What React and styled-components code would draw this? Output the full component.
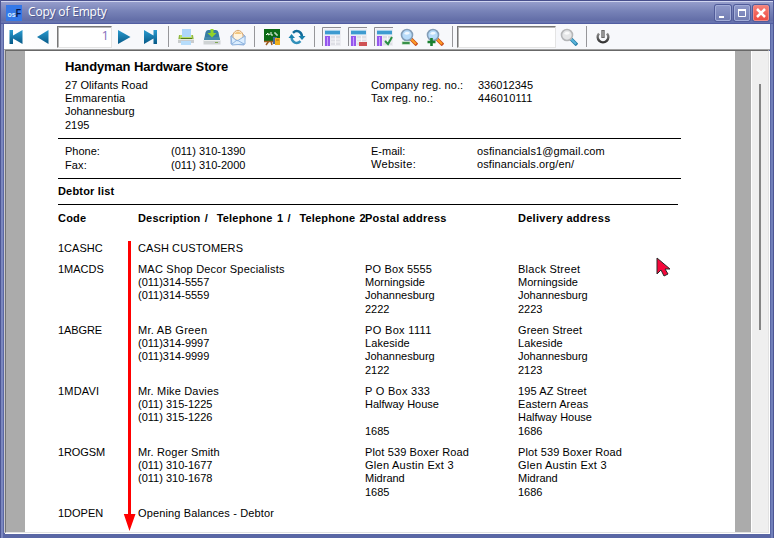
import React from "react";
import styled, { createGlobalStyle } from "styled-components";

const GlobalStyle = createGlobalStyle`
  * { box-sizing: border-box; }
  html, body { margin: 0; padding: 0; overflow: hidden; }
`;

const Window = styled.div`
  position: relative;
  width: 774px;
  height: 538px;
  display: flex;
  flex-direction: column;
  background: linear-gradient(90deg, #4d5694 0 1px, #7b87bf 1px 3px, #5a67a5 3px 771px, #7180ba 771px 773px, #4d5694 773px);
  padding: 0 4px 4px;
  font-family: "Liberation Sans", Arial, sans-serif;
`;

const TitleBar = styled.header`
  height: 24px;
  flex: none;
  margin: 0 -4px;
  padding: 1px 4px 0 5px;
  display: flex;
  align-items: center;
  background: linear-gradient(#484f8c 0 1px, #d0d5f0 1px 2px, #959dcb 2px, #7883b8 11px, #616ca6 21px, #6f7cb5 22px, #47539a 24px);
  border-left: 1px solid #4d5694;
  border-right: 1px solid #4d5694;
`;

const AppIcon = styled.svg`
  width: 16px;
  height: 16px;
`;

const Caption = styled.div`
  flex: 1;
  margin: -2px 0 0 6px;
  font: 12px "Open Sans", sans-serif;
  line-height: 20px;
  letter-spacing: -0.18px;
  color: #fff;
  text-shadow: 1px 1px 0 #525b91;
`;

const CaptionButtons = styled.div`
  display: flex;
  gap: 3px;
`;

const CaptionButton = styled.div`
  width: 16px;
  height: 16px;
  border-radius: 2px;
  border: 1px solid ${(p) => (p.$close ? "#f18a86" : "#a3add8")};
  box-shadow: 0 0 0 1px #515c9a;
  background: ${(p) => (p.$close ? "linear-gradient(#f58078, #ef4c43)" : "linear-gradient(#8e98c9, #727db2)")};
  svg { display: block; width: 14px; height: 14px; }
`;

const Toolbar = styled.nav`
  height: 26px;
  flex: none;
  padding-left: 2px;
  display: flex;
  align-items: center;
  border-bottom: 1px solid #a0a0a0;
  background: linear-gradient(90deg, #fff, #f7f8fb 15%);
`;

const Tool = styled.div`
  width: ${(p) => p.$w || 26}px;
  height: 24px;
  flex: none;
  display: flex;
  align-items: center;
  justify-content: center;
  svg { display: block; width: ${(p) => p.$size || 18}px; height: ${(p) => p.$size || 18}px; }
`;

const Separator = styled.div`
  width: 1px;
  height: 21px;
  flex: none;
  background: #96969a;
  margin: 0 ${(p) => p.$after || 0}px 0 ${(p) => p.$before || 0}px;
`;

const Field = styled.div`
  width: ${(p) => p.$w}px;
  height: 22px;
  flex: none;
  background: #fff;
  border: 1px solid #e4e4e4;
  border-top-color: #777;
  border-left-color: #777;
  box-shadow: inset 1px 1px #b5b5b5;
  text-align: right;
  padding-right: 2px;
  font: 13px/16px "Open Sans", sans-serif;
  color: #8672bd;
`;

const Viewer = styled.main`
  flex: 1;
  min-height: 0;
  display: flex;
  margin: 0 1px 1px;
  border: 1px solid #e2e2e2;
  border-top-color: #686868;
  border-left-color: #747474;
  background: #ababab;
  box-shadow: -1px 0 #c9c9cf, 1px 1px #fff, 0 1px #fff;
`;

const Paper = styled.article`
  width: 710px;
  margin-left: 19px;
  background: #fff;
  padding: 8px 0 0 33px;
  overflow: hidden;
  color: #000;
  font-size: 11px;
  white-space: pre;
`;

const ScrollTrack = styled.div`
  margin-left: auto;
  width: 17px;
  border-left: 1px solid #fff;
  background: #efefef;
  padding: 33px 0 0 7px;
`;

const ScrollThumb = styled.div`
  width: 2px;
  height: 246px;
  background: #858585;
`;

const CompanyName = styled.h1`
  margin: 0 0 5px 7px;
  font-size: 13px;
  line-height: 15px;
  letter-spacing: -0.13px;
`;

const CompanyDetails = styled.section`
  height: 59px;
  display: grid;
  grid-template-columns: 306px 107px 1fr;
  margin-left: 7px;
`;

const ContactDetails = styled.section`
  height: 39px;
  padding-top: 6px;
  display: grid;
  grid-template-columns: 106px 200px 106px 1fr;
  margin-left: 7px;
`;

const Rule = styled.div`
  width: ${(p) => p.$w}px;
  height: 1px;
  background: #000;
`;

const SectionTitle = styled.h2`
  height: 25px;
  margin: 0;
  padding-top: 5px;
  font-size: 11px;
  line-height: 14px;
  letter-spacing: 0.18px;
`;

const Record = styled.div`
  display: grid;
  grid-template-columns: 80px 227px 153px 1fr;
  height: ${(p) => p.$h || 61}px;
`;

const HeadRow = styled(Record)`
  height: 37px;
  padding-top: 7px;
  font-weight: bold;
`;

const Line = styled.div`
  height: ${(p) => p.$lh}px;
  line-height: 13px;
  letter-spacing: ${(p) => p.$ls}px;
  word-spacing: ${(p) => p.$ws}px;
  &:nth-child(4) { margin-top: 1px; }
`;

// Each line is either a string or a [text, letterSpacing, wordSpacing] tuple.
const Lines = ({ lines, lh = 13 }) => (
  <div>
    {lines.map((line, i) => {
      const [text, tracking = 0, wordGap = 0] = Array.isArray(line) ? line : [line];
      return <Line key={i} $ls={tracking} $ws={wordGap} $lh={lh}>{text}</Line>;
    })}
  </div>
);

const ArrowOverlay = styled.svg`
  position: absolute;
  left: 123px;
  top: 241px;
  width: 13px;
  height: 291px;
`;

const Pointer = styled.svg`
  position: absolute;
  left: 655px;
  top: 257px;
  width: 16px;
  height: 21px;
`;

const Svg = ({ children }) => <svg viewBox="0 0 18 18">{children}</svg>;

const NavIcon = ({ first, last, back }) => (
  <Svg>
    <defs>
      <linearGradient id="navBlue" x1="0" y1="0" x2="0" y2="1">
        <stop offset="0" stopColor="#2a9bd0" />
        <stop offset="1" stopColor="#075987" />
      </linearGradient>
    </defs>
    <g fill="url(#navBlue)">
      {first && <path d="M2.500 2h3.500v5.500L15.500 2v14L6 10.500V16H2.500z" />}
      {last && <path d="M16 2h-3.500v5.500L3 2v14l9.500-5.500V16H16z" />}
      {!first && !last && <path d={back ? "M15.500 2v14L4 9z" : "M3 2v14l12.500-7z"} />}
    </g>
  </Svg>
);

const PrintIcon = () => (
  <Svg>
    <path d="M5 1h9v9H5z" fill="#aed6f9" />
    <path d="M2 7h3v3h9V7h2l1 6H1z" fill="#91b943" />
    <path d="M4 9h11v2H4z" fill="#517b1e" />
    <path d="M3 7h2v2h9V7h1v3H3z" fill="#b9df68" />
    <path d="M1 12h16v3H1z" fill="#c9cccd" />
    <path d="M4 13h10v4H4z" fill="#b7ddfb" />
    <path d="M1 11h16v1H1z" fill="#e6eadf" />
  </Svg>
);

const SaveIcon = () => (
  <Svg>
    <path d="M5 2h8q2 0 2.500 2.500L17 12H1l1.500-7.500Q3 2 5 2z" fill="#367da3" />
    <path d="M2 9h14l1 4H1z" fill="#4489aa" />
    <path d="M.5 12h17v4.500H.5z" fill="#cfd3d4" />
    <path d="M.5 12h17v1H.5z" fill="#edf0f0" />
    <path d="M12 14h3v1h-3z" fill="#80a955" />
    <path d="M7.500 1h3v4h3L9 9.500 4.500 5h3z" fill="#91d329" />
  </Svg>
);

const MailIcon = () => (
  <Svg>
    <path d="M2 8l7-6 7 6-1 9-13-1z" fill="#b9d5f4" stroke="#91add8" />
    <path d="M4 7c1-6 9-6 10 0v4l-5 2-5-3z" fill="#fff4df" stroke="#dba76c" />
    <path d="M5 6q4-5 8 0z" fill="#f2c67e" />
    <path d="M2 8l6 5 8-5v8l-13 1zM3 16l5-4 7 4" fill="#dceeff" stroke="#8eb3de" />
  </Svg>
);

const BoardIcon = () => (
  <Svg>
    <path d="M1 1h16v12H1z" fill="#0c6a16" />
    <path d="M3 7l2-2v2l2-1M8 4v3h2M11 5h2v2h2" fill="none" stroke="#f3fff1" />
    <path d="M3 17l3-4M8 13l1 4M1 13.500h10" stroke="#9d5c1e" strokeWidth="1.500" />
    <path d="M10 9h4v7h-4z" fill="#47689a" />
    <path d="M12 10h5v7h-5z" fill="#efae1c" />
    <path d="M13 12h3" stroke="#a76509" />
  </Svg>
);

const RefreshIcon = () => (
  <Svg>
    <path d="M5 4.800c3.500-3.500 8.500-1.500 9 3.700" fill="none" stroke="#116b9a" strokeWidth="2.500" />
    <path d="M12.500 13.200c-3.500 3.500-8.500 1.500-9-3.700" fill="none" stroke="#3290ba" strokeWidth="2.500" />
    <path d="M10.500 8h7l-3.500 4zM.5 10h6.500L3.500 6z" fill="#1880ad" />
  </Svg>
);

const LayoutIcon = ({ mark }) => (
  <svg viewBox="0 0 19 19">
    <path d="M0 0h19v19H0z" fill="#f5f5f9" />
    <path d="M.5 19V.5H19" fill="none" stroke="#8c8c91" />
    <path d="M2 2h17v17H2z" fill="#ededf2" />
    <path d="M3 3h15v5H3z" fill="#a9d4ec" />
    <path d="M3 4h15v3H3z" fill="#3e9bd0" />
    <path d="M3 9h5v10H3z" fill="#9557ed" />
    <path d="M5 10h1v9H5z" fill="#c8a1ff" />
    <path d="M9 9h9v9H9z" fill="#dedfe5" />
    <path d="M9 12h9M9 15h9M13.500 9v9" stroke="#f8f8fb" />
    {mark === "minus" && <path d="M11 15h8v4h-8z" fill="#cf5255" />}
    {mark === "check" && <path d="M11 14l3 3 4-7" fill="none" stroke="#299043" strokeWidth="2" />}
  </svg>
);

const ZoomIcon = ({ kind }) => {
  const grey = kind === "search";
  return (
    <Svg>
      <path d="M11 11l6 6" stroke={grey ? "#287fa8" : "#c94c1c"} strokeWidth="3.600" />
      <path d="M11 11l5 5" stroke={grey ? "#58b4db" : "#ff9d25"} strokeWidth="2" />
      <circle cx="7" cy="7" r="5.500" fill={grey ? "#e5e6e7" : "#b8dcfa"} stroke={grey ? "#b5b6b8" : "#849eb8"} strokeWidth="1.600" />
      <path d="M4 6q2-4 6-1-2 3-6 1" fill="#fff" opacity=".8" />
      {kind === "out" && <path d="M2 13.500h8v3H2z" fill="#389149" stroke="#d5ebd7" strokeWidth=".7" />}
      {kind === "in" && <path d="M5.500 10v8M1.500 14h8" stroke="#198030" strokeWidth="2.600" />}
    </Svg>
  );
};

const PowerIcon = () => (
  <Svg>
    <defs>
      <linearGradient id="powerGrey" x1="0" y1="0" x2="0" y2="1">
        <stop offset="0" stopColor="#8a8a8a" />
        <stop offset="1" stopColor="#333" />
      </linearGradient>
    </defs>
    <path d="M5 5.500a5.300 5.300 0 1 0 8 0" fill="none" stroke="url(#powerGrey)" strokeWidth="2.500" />
    <path d="M9 2v8" stroke="#696969" strokeWidth="3.400" />
    <path d="M9 3v6" stroke="#b0b0b0" strokeWidth="1.200" />
  </Svg>
);

const records = [
  {
    code: ["1MACDS"],
    description: [["MAC Shop Decor Specialists", 0.21], "(011)314-5557", "(011)314-5559"],
    postal: [["PO Box 5555", 0.15], "Morningside", "Johannesburg", "2222"],
    delivery: [["Black Street", 0.25], "Morningside", "Johannesburg", "2223"],
  },
  {
    code: [["1ABGRE", -0.1]],
    description: [["Mr. AB Green", 0.27], "(011)314-9997", "(011)314-9999"],
    postal: [["PO Box 1111", 0.34], ["Lakeside", 0.1], "Johannesburg", "2122"],
    delivery: [["Green Street", 0.1], ["Lakeside", 0.1], "Johannesburg", "2123"],
  },
  {
    code: [["1MDAVI", 0.2]],
    description: [["Mr. Mike Davies", 0.18], "(011) 315-1225", "(011) 315-1226"],
    postal: [["P O Box 333", 0.28], "Halfway House", "", "1685"],
    delivery: [["195 AZ Street", 0.1], ["Eastern Areas", 0.1], "Halfway House", "1686"],
  },
  {
    code: [["1ROGSM", -0.1]],
    description: [["Mr. Roger Smith", 0.16], "(011) 310-1677", "(011) 310-1678"],
    postal: [["Plot 539 Boxer Road", 0.13], ["Glen Austin Ext 3", 0.26], "Midrand", "1685"],
    delivery: [["Plot 539 Boxer Road", 0.13], ["Glen Austin Ext 3", 0.26], "Midrand", "1686"],
  },
  {
    code: ["1DOPEN"],
    description: [["Opening Balances - Debtor", 0.13]],
    postal: [],
    delivery: [],
  },
];

export default function App() {
  return (
    <Window>
      <GlobalStyle />
      <TitleBar>
        <AppIcon viewBox="0 0 16 16">
          <path d="M0 0h16v16H0z" fill="#3478e8" />
          <text x="1.500" y="12" fontSize="8" fontWeight="bold" fill="#d8ecff" textLength="13.500" lengthAdjust="spacingAndGlyphs">
            os<tspan fontSize="10" fill="#061747">F</tspan>
          </text>
        </AppIcon>
        <Caption>Copy of Empty</Caption>
        <CaptionButtons>
          <CaptionButton><svg viewBox="0 0 14 14"><path d="M3 10h5v2H3z" fill="#fff" /></svg></CaptionButton>
          <CaptionButton><svg viewBox="0 0 14 14"><path d="M3.500 4h7v6.500h-7z" fill="none" stroke="#fff" /><path d="M3 4h8" stroke="#fff" strokeWidth="2" /></svg></CaptionButton>
          <CaptionButton $close><svg viewBox="0 0 14 14"><path d="M3 3l8 8M11 3l-8 8" stroke="#fff" strokeWidth="2.500" /></svg></CaptionButton>
        </CaptionButtons>
      </TitleBar>
      <Toolbar>
        <Tool $w={20}><NavIcon first /></Tool>
        <Tool $w={31}><NavIcon back /></Tool>
        <Field $w={55}>1</Field>
        <Tool $w={24}><NavIcon /></Tool>
        <Tool $w={28}><NavIcon last /></Tool>
        <Separator $before={4} $after={4} />
        <Tool $w={25}><PrintIcon /></Tool>
        <Tool $w={27}><SaveIcon /></Tool>
        <Tool><MailIcon /></Tool>
        <Separator $before={3} $after={4} />
        <Tool><BoardIcon /></Tool>
        <Tool $w={24}><RefreshIcon /></Tool>
        <Separator $before={5} $after={3} />
        <Tool $size={19}><LayoutIcon /></Tool>
        <Tool $size={19}><LayoutIcon mark="minus" /></Tool>
        <Tool $size={19}><LayoutIcon mark="check" /></Tool>
        <Tool><ZoomIcon kind="out" /></Tool>
        <Tool><ZoomIcon kind="in" /></Tool>
        <Separator $before={4} $after={4} />
        <Field $w={99} />
        <Tool><ZoomIcon kind="search" /></Tool>
        <Separator $before={4} $after={3} />
        <Tool><PowerIcon /></Tool>
      </Toolbar>
      <Viewer>
        <Paper>
          <CompanyName>Handyman Hardware Store</CompanyName>
          <CompanyDetails>
            <Lines lines={[["27 Olifants Road", 0.06], ["Emmarentia", 0.1], "Johannesburg", "2195"]} />
            <Lines lines={[["Company reg. no.:", 0.1], ["Tax reg. no.:", 0.13]]} />
            <Lines lines={["336012345", ["446010111", 0.12]]} />
          </CompanyDetails>
          <Rule $w={623} />
          <ContactDetails>
            <Lines lh={14} lines={["Phone:", ["Fax:", 0.1]]} />
            <Lines lh={14} lines={["(011) 310-1390", "(011) 310-2000"]} />
            <Lines lines={["E-mail:", ["Website:", 0.3]]} />
            <Lines lines={[["osfinancials1@gmail.com", 0.13], ["osfinancials.org/en/", 0.12]]} />
          </ContactDetails>
          <Rule $w={623} />
          <SectionTitle>Debtor list</SectionTitle>
          <Rule $w={620} />
          <HeadRow>
            <Lines lines={[["Code", 0.2]]} />
            <Lines lines={[["Description /  Telephone 1 /  Telephone 2", 0.18, 1.1]]} />
            <Lines lines={[["Postal address", 0.24]]} />
            <Lines lines={[["Delivery address", 0.28]]} />
          </HeadRow>
          <Record $h={21}>
            <Lines lines={["1CASHC"]} />
            <Lines lines={[["CASH CUSTOMERS", 0.1]]} />
          </Record>
          {records.map((r) => (
            <Record key={r.description[0]}>
              <Lines lines={r.code} />
              <Lines lines={r.description} />
              <Lines lines={r.postal} />
              <Lines lines={r.delivery} />
            </Record>
          ))}
        </Paper>
        <ScrollTrack><ScrollThumb /></ScrollTrack>
      </Viewer>
      <ArrowOverlay viewBox="0 0 13 291">
        <path d="M5 0h3v273h4.500L6.500 290 .8 273H5z" fill="#f00" />
      </ArrowOverlay>
      <Pointer viewBox="0 0 16 21">
        <path d="M2 1v16l4-4 3 6 4-2-3-5h5z" fill="#f5083b" stroke="#292929" />
      </Pointer>
    </Window>
  );
}
